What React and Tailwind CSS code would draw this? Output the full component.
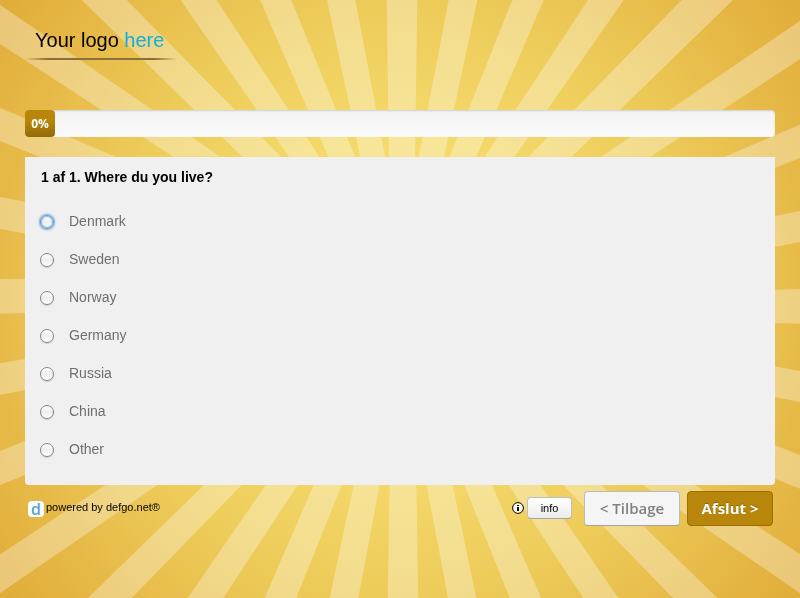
import React, { useState } from 'react';

const COUNTRIES = ['Denmark', 'Sweden', 'Norway', 'Germany', 'Russia', 'China', 'Other'];

// Sunbeams on a 2400 x 1794 canvas, clockwise from the top left
const RAYS = [
  '0,14 0,132 520,470 661,470',
  '245,0 380,0 843,470 727,470',
  '542,0 650,0 958,470 867,470',
  '780,0 874,0 1065,470 985,470',
  '981,0 1066,0 1155,470 1081,470',
  '1160,0 1252,0 1245,470 1167,470',
  '1346,0 1432,0 1332,470 1256,470',
  '1537,0 1631,0 1429,470 1349,470',
  '1764,0 1871,0 1544,470 1454,470',
  '2045,0 2199,0 1715,470 1586,470',
  '2400,62 2400,178 1951,470 1804,470',
  '2400,374 2400,474 2174,563 2174,470',
  '2400,633 2400,726 2250,756 2250,663',
  '2400,868 2400,971 2250,967 2250,870',
  '2400,1113 2400,1206 2250,1176 2250,1085',
  '2400,1365 2400,1466 2250,1406 2250,1307',
  '2400,1662 2400,1780 1929,1455 2084,1455',
  '2152,1794 2019,1794 1689,1455 1804,1455',
  '1855,1794 1750,1794 1526,1455 1621,1455',
  '1623,1794 1529,1794 1393,1455 1476,1455',
  '1429,1794 1344,1794 1280,1455 1358,1455',
  '1255,1794 1163,1794 1169,1455 1249,1455',
  '1075,1794 989,1794 1061,1455 1139,1455',
  '889,1794 794,1794 941,1455 1025,1455',
  '670,1794 563,1794 797,1455 893,1455',
  '395,1794 264,1794 612,1455 725,1455',
  '0,1780 0,1663 317,1455 472,1455',
  '0,1455 0,1353 150,1293 150,1395',
  '0,1185 0,1090 150,1064 150,1155',
  '0,941 0,837 150,837 150,937',
  '0,687 0,591 150,619 150,713',
  '0,423 0,323 347,470 347,562',
];

const Sunburst = () => (
  <svg
    className="fixed inset-0 -z-10 h-full w-full"
    viewBox="0 0 2400 1794"
    preserveAspectRatio="xMidYMid slice"
    aria-hidden="true"
  >
    <defs>
      <radialGradient id="sun" gradientUnits="userSpaceOnUse" cx="1205" cy="900" r="1500">
        <stop offset="0.28" stopColor="#f5dc6e" />
        <stop offset="0.6" stopColor="#edcb59" />
        <stop offset="0.8" stopColor="#e7bb49" />
        <stop offset="1" stopColor="#e1ac39" />
      </radialGradient>
    </defs>
    <rect width="2400" height="1794" fill="url(#sun)" />
    <g fill="#fff" fillOpacity="0.31">
      {RAYS.map((points) => (
        <polygon key={points} points={points} />
      ))}
    </g>
  </svg>
);

const Logo = () => (
  <div className="w-38 pt-7">
    <p className="pl-2.5 text-xl leading-6 text-black">
      Your logo <span className="text-[#0db0dd]">here</span>
    </p>
    <div className="mt-1.5 h-0.5 bg-[linear-gradient(to_right,transparent,#8c7038_15%,#8c7038_85%,transparent)]" />
  </div>
);

const App = () => {
  const [answer, setAnswer] = useState('');

  return (
    <div className="isolate min-h-screen px-[25px] font-['Liberation_Sans',Arial,sans-serif]">
      <Sunburst />

      <header className="h-[110px]">
        <Logo />
      </header>

      {/* Progress */}
      <div className="h-[27px] rounded bg-linear-to-b from-[#f3f3f3] to-[#fafafa] shadow-[inset_0_1px_2px_rgba(0,0,0,0.15)]">
        <div className="flex h-full w-[30px] items-center justify-center rounded bg-linear-to-b from-[#b8860b] from-40% to-[#916a09] font-['Open_Sans',sans-serif] text-xs font-bold text-white">
          0%
        </div>
      </div>

      <form onSubmit={(e) => e.preventDefault()}>
        <fieldset className="mt-5 min-h-[328px] rounded-b bg-[#f0f0f0] px-4">
          <legend className="float-left w-full pt-2.5 text-sm leading-5 font-bold text-black">
            1 af 1. Where du you live?
          </legend>
          <div className="clear-both pt-[15px]">
            {COUNTRIES.map((name, i) => (
              <label key={name} className="flex h-[38px] items-center gap-[15px] text-sm text-[#6f6f6f]">
                <input
                  type="radio"
                  name="country"
                  value={name}
                  checked={answer === name}
                  onChange={() => setAnswer(name)}
                  className={`mt-0.5 -ml-px h-3.5 w-3.5 appearance-none rounded-full border bg-linear-to-b from-white via-[#eee] to-white outline-none checked:bg-[#6f6f6f] ${
                    i === 0
                      ? 'border-[#5f97d0] shadow-[0_0_2px_1px_#78a9da,inset_0_0_1px_1px_#8bb5e0]'
                      : 'border-[#858585] shadow-[0_1px_1px_rgba(0,0,0,0.15)]'
                  }`}
                />
                {name}
              </label>
            ))}
          </div>
        </fieldset>

        <footer className="flex items-start justify-between pt-1.5 pr-0.5 pl-[3px]">
          <a href="#defgo" className="mt-2 flex items-start gap-0.5 text-[11px] leading-4 text-black">
            <span className="mt-0.5 flex h-4 w-4 items-center justify-center rounded-sm bg-[#f8fcfd] font-['Open_Sans',sans-serif] text-base leading-4 font-semibold text-[#5aa5c0]">
              d
            </span>
            powered by defgo.net®
          </a>

          <div className="flex items-start">
            <svg className="mt-[11px] mr-[3px] h-3 w-3" viewBox="0 0 12 12" aria-hidden="true">
              <circle cx="6" cy="6" r="5.4" fill="#fff" fillOpacity="0.85" stroke="#000" strokeWidth="1" />
              <path d="M5 3h2v1H5zM5 5h2v4H5z" fill="#000" />
            </svg>
            <button
              type="button"
              className="mt-1.5 mr-3 h-[22px] w-[45px] rounded border border-b-[#a4a4a4] border-[#c0c0c0] bg-linear-to-b from-white to-[#ececec] text-[11px] text-black"
            >
              info
            </button>
            <button
              type="button"
              className="mr-[7px] h-[35px] w-24 rounded border border-b-[#a2a2a2] border-[#bbb] bg-[#f5f5f5] font-['Open_Sans',sans-serif] text-[15px] font-semibold text-[#808080]"
            >
              &lt; Tilbage
            </button>
            <button
              type="submit"
              className="h-[35px] w-[86px] rounded border border-[#986f09] bg-[#b8860b] font-['Open_Sans',sans-serif] text-[15px] font-bold text-white [text-shadow:0_-1px_0_rgba(0,0,0,0.25)]"
            >
              Afslut &gt;
            </button>
          </div>
        </footer>
      </form>
    </div>
  );
};

export default App;
